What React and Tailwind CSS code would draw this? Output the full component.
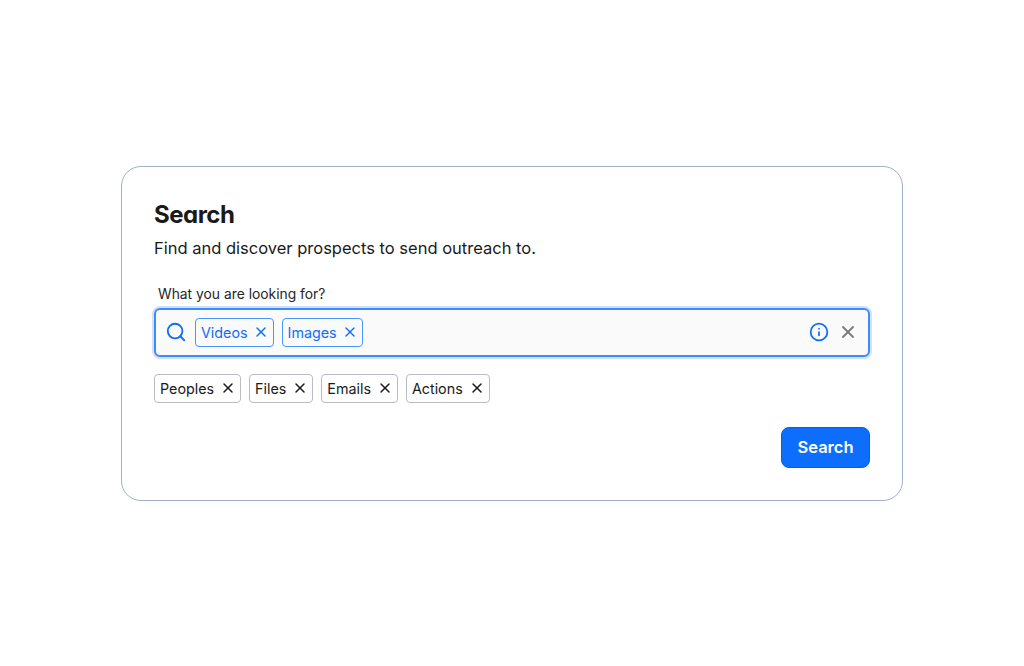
import React from 'react';
import { Search, Info, X } from 'lucide-react';

const selected = ['Videos', 'Images'];
const suggestions = ['Peoples', 'Files', 'Emails', 'Actions'];

const Tag = ({ label, active }) => (
  <span
    className={`flex h-[29px] items-center rounded-[4px] border pl-[5px] pr-[4px] text-[14.3px] ${
      active ? 'gap-[5px] border-[#4a94fd] text-[#0d6efd]' : 'gap-[6px] border-[#b9bcc2] text-[#1a1a1a]'
    }`}
  >
    <span className="pt-px">{label}</span>
    <X size={16} strokeWidth={2.2} />
  </span>
);

const App = () => {
  return (
    <div className="flex h-[666px] items-center justify-center bg-white font-['Inter',sans-serif]">
      <div className="flex h-[335px] w-[782px] flex-col rounded-[20px] border border-[#9fb0c9] px-[32px] pt-[32px]">
        <h1 className="font-['Inter',sans-serif] text-[24px] leading-[32px] font-bold tracking-[-0.5px] text-[#1a1a1a] [font-feature-settings:'cv11']">Search</h1>
        <p className="mt-[5px] text-[16.5px] leading-[24px] text-[#1a1a1a]">Find and discover prospects to send outreach to.</p>

        <label className="mt-[24px] pl-[4px] text-[13.85px] leading-[20px] text-[#262626]">What you are looking for?</label>
        <div className="mt-[4px] flex h-[49px] items-center rounded-[6px] border-2 border-[#3d8bfd] bg-[#fafafa] pl-[9px] pr-[10px] shadow-[0_0_0_2px_#cfe2ff]">
          <Search size={22} strokeWidth={2} className="text-[#0d6efd]" />
          <div className="ml-[8px] flex gap-[8px]">
            {selected.map((item) => (
              <Tag key={item} label={item} active />
            ))}
          </div>
          <Info size={20} strokeWidth={2.1} className="ml-auto text-[#0d6efd]" />
          <X size={20} strokeWidth={2.2} className="ml-[9px] text-[#7a7a7a]" />
        </div>

        <div className="mt-[17px] flex gap-[8px]">
          {suggestions.map((item) => (
            <Tag key={item} label={item} />
          ))}
        </div>

        <div className="mt-[24px] flex justify-end">
          <button className="h-[41px] w-[89px] rounded-[8px] border border-[#0b5ed7] bg-[#0d6efd] text-[16.5px] font-semibold text-white">
            Search
          </button>
        </div>
      </div>
    </div>
  );
};

export default App;
